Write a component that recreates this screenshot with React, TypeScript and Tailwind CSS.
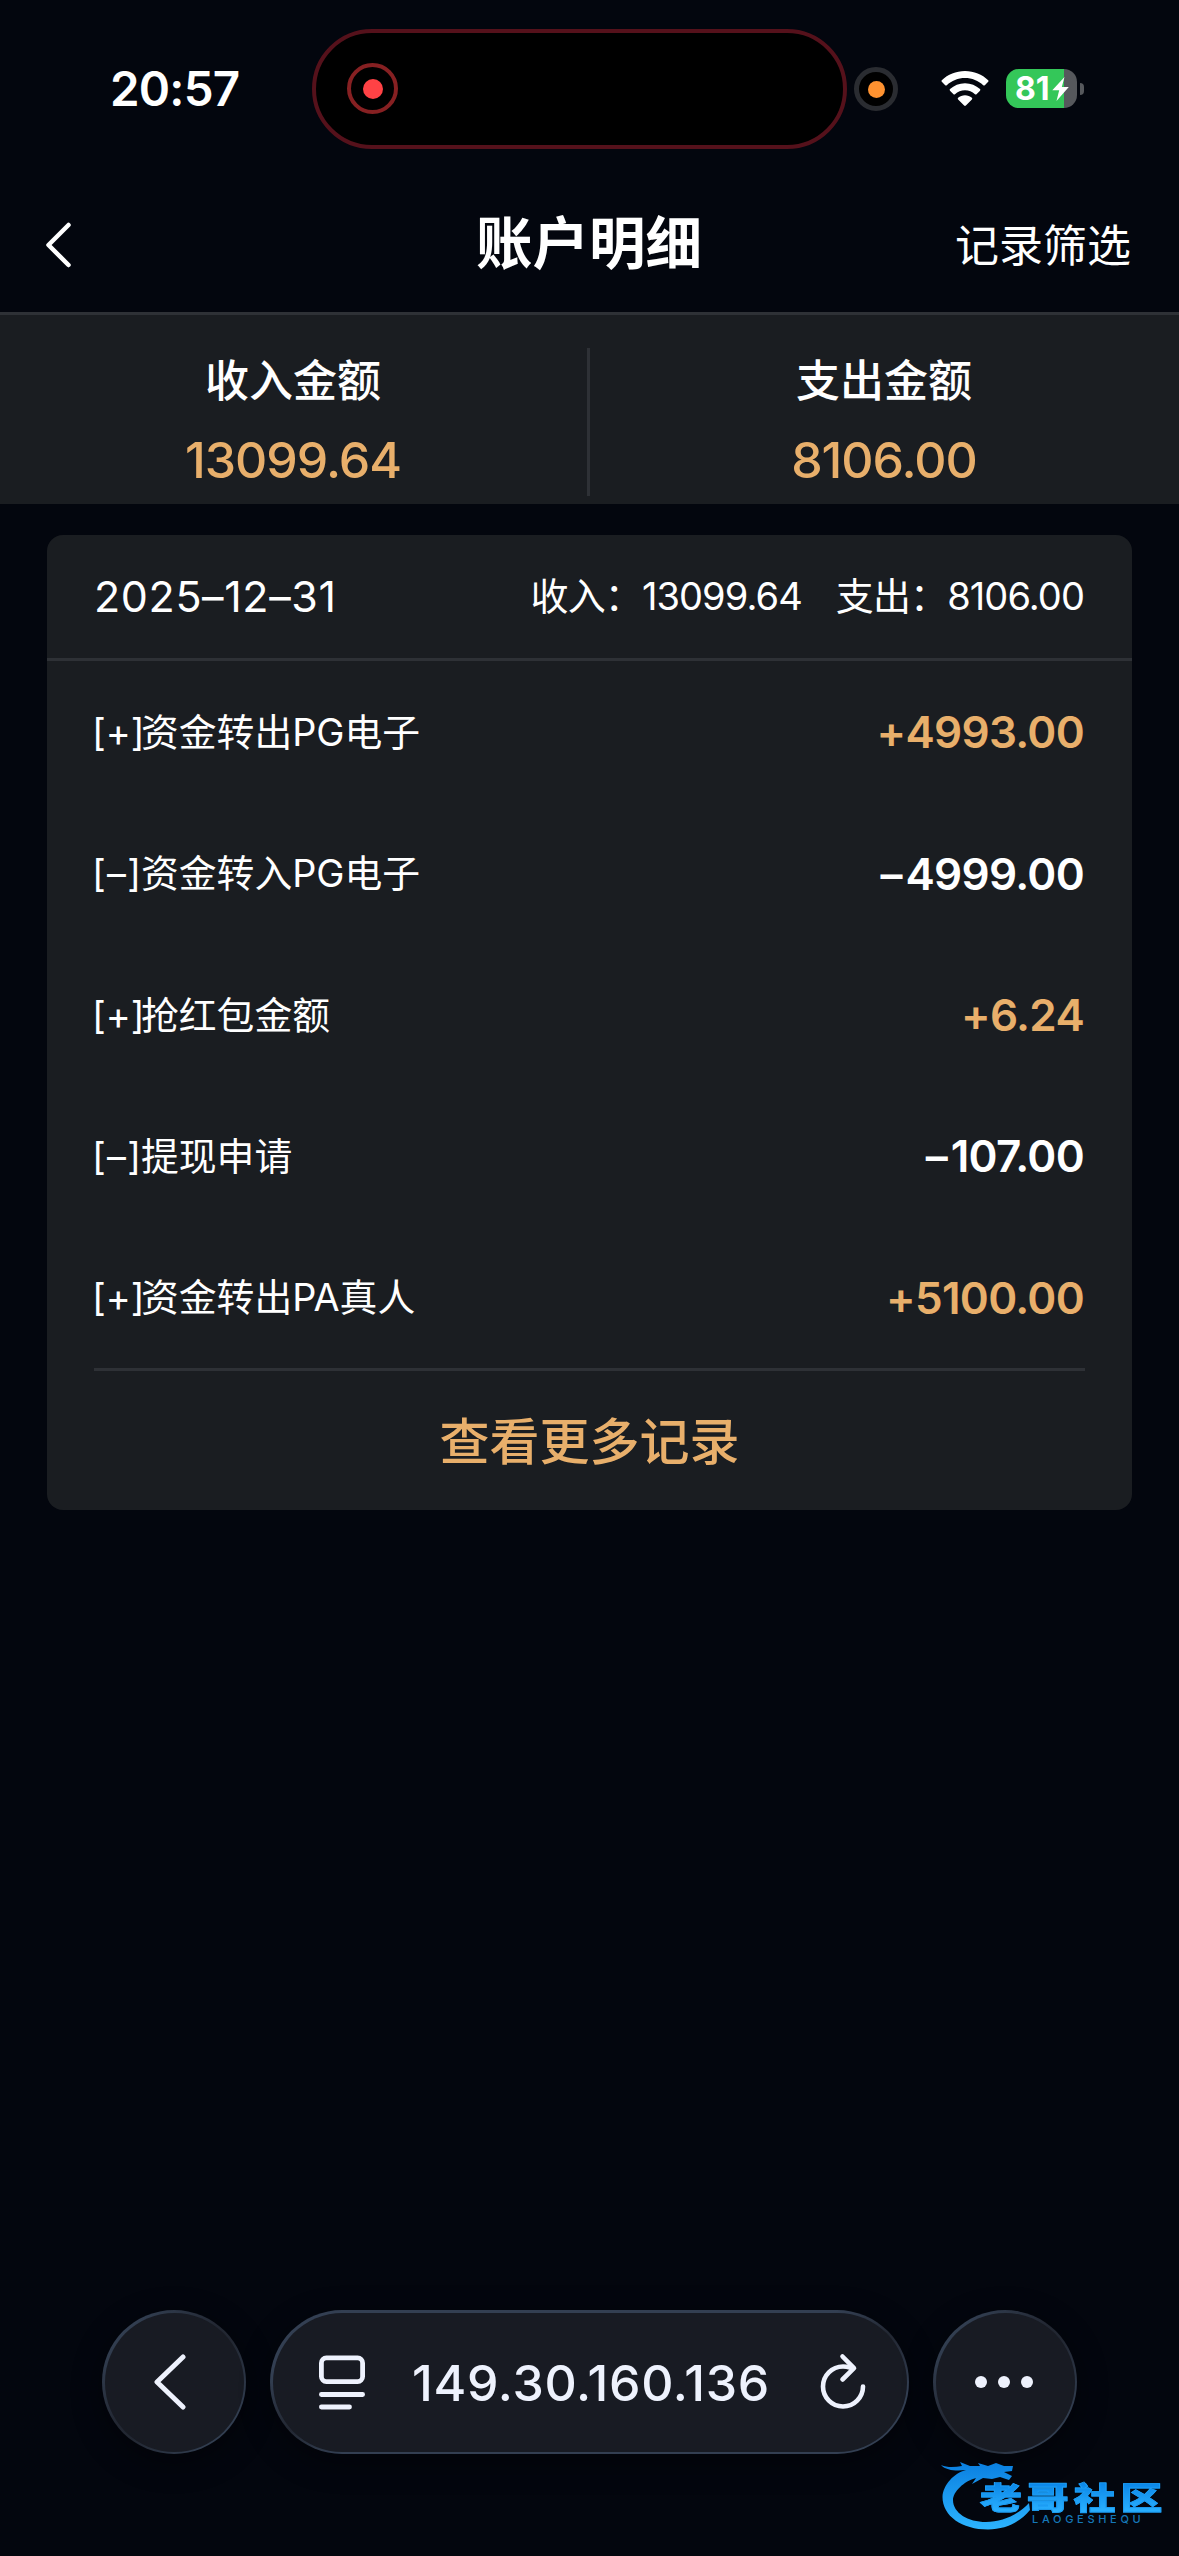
const records = [
  { sign: "+", label: "资金转出PG电子", amount: "4993.00" },
  { sign: "–", label: "资金转入PG电子", amount: "4999.00" },
  { sign: "+", label: "抢红包金额", amount: "6.24" },
  { sign: "–", label: "提现申请", amount: "107.00" },
  { sign: "+", label: "资金转出PA真人", amount: "5100.00" },
];

function WifiIcon() {
  return (
    <svg width="48" height="36" viewBox="0 0 48 36" fill="white">
      <path d="M24 0C33 0 41.200 3.500 47.200 9.200Q48 10 47.200 10.800L43.800 14.200Q43 15 42.200 14.200C37.400 9.700 31 7 24 7C17 7 10.600 9.700 5.800 14.200Q5 15 4.200 14.200L0.800 10.800Q0 10 0.800 9.200C6.800 3.500 15 0 24 0Z" />
      <path d="M24 12.200C29.800 12.200 35 14.400 39 18.100Q39.800 18.900 39 19.700L35.500 23.200Q34.800 23.900 34 23.200C31.300 20.800 27.800 19.300 24 19.300C20.200 19.300 16.700 20.800 14 23.200Q13.200 23.900 12.500 23.200L9 19.700Q8.200 18.900 9 18.100C13 14.400 18.200 12.200 24 12.200Z" />
      <path d="M24 24.200C26.600 24.200 29 25.200 30.900 26.800Q31.700 27.600 30.900 28.400L24.900 34.600Q24 35.500 23.100 34.600L17.100 28.400Q16.300 27.600 17.100 26.800C19 25.200 21.400 24.200 24 24.200Z" />
    </svg>
  );
}

function Battery() {
  return (
    <div className="flex items-center gap-[3px]">
      <div className="flex h-[39px] w-[71px] items-center overflow-hidden rounded-[13px] bg-linear-to-r from-[#34c759] from-82% to-[#56585c] to-82% pl-[9px]">
        <span className="text-[32px] leading-none font-bold">81</span>
        <svg
          className="ml-[2px]"
          width="17"
          height="24"
          viewBox="0 0 17 24"
          fill="white"
        >
          <path d="M12.500 0L0.300 13.200H7.200L4.500 24L16.800 9.900H9.800Z" />
        </svg>
      </div>
      <div className="h-[12px] w-[4px] rounded-r-full bg-[#56585c]" />
    </div>
  );
}

function StatusBar() {
  return (
    <div className="flex h-[177px] items-center">
      <div className="w-[312px] pl-[110px] text-[47.500px] leading-none font-semibold tracking-[-0.800px]">
        20:57
      </div>
      <div className="flex h-[120px] w-[535px] items-center rounded-full border-[4px] border-[#55111b] bg-black pl-[31px]">
        <div className="flex size-[51px] items-center justify-center rounded-full border-[4px] border-[#862022]">
          <div className="size-[20px] rounded-full bg-[#ff4245]" />
        </div>
      </div>
      <div className="mt-px ml-[7px] flex size-[44px] items-center justify-center rounded-full border-[5px] border-[#2a2c31] bg-black">
        <div className="size-[17px] rounded-full bg-[#ff9230]" />
      </div>
      <div className="ml-[43px] flex items-center gap-[17px]">
        <WifiIcon />
        <Battery />
      </div>
    </div>
  );
}

function Header() {
  return (
    <div className="grid h-[135px] grid-cols-3 items-center pr-[48px] pl-[45px]">
      <svg
        className="mt-[1px]"
        width="27"
        height="46"
        viewBox="0 0 27 46"
        fill="none"
        stroke="white"
        strokeWidth="4.500"
        strokeLinecap="round"
        strokeLinejoin="round"
      >
        <path d="M23.500 3L3.500 23L23.500 43" />
      </svg>
      <h1 className="mb-[1px] pl-[2px] text-center text-[56.500px] leading-none font-bold">
        账户明细
      </h1>
      <span className="mt-[2px] text-right text-[44px] leading-none">
        记录筛选
      </span>
    </div>
  );
}

function Total({ label, value }: { label: string; value: string }) {
  return (
    <div className="flex flex-col items-center pr-[1px]">
      <span className="mt-[41px] text-[44px] leading-[50px] font-medium">
        {label}
      </span>
      <span className="mt-[24px] text-[50px] leading-[60px] font-medium tracking-[-1px] text-[#e8af6b]">
        {value}
      </span>
    </div>
  );
}

function RecordCard() {
  return (
    <div className="mx-[47px] mt-[31px] rounded-[16px] bg-[#1a1d21]">
      <div className="flex h-[126px] items-center justify-between border-b-[3px] border-[#2e3136] px-[47px]">
        <span className="text-[43px] tracking-[0.600px]">2025–12–31</span>
        <div className="flex gap-[34px] pr-[1px] text-[38px] tracking-[-0.900px]">
          <span>收入：13099.64</span>
          <span>支出：8106.00</span>
        </div>
      </div>
      <div className="px-[47px]">
        {records.map(({ sign, label, amount }) => (
          <div
            key={label}
            className="flex h-[141.400px] items-center justify-between pt-[1px]"
          >
            <div className="-ml-[2px] flex text-[37.800px]">
              <span className="flex w-[49px] justify-between">
                <span>[</span>
                <span>{sign}</span>
                <span>]</span>
              </span>
              <span>{label}</span>
            </div>
            <span
              className={`pr-[1px] text-[44px] font-semibold tracking-[-0.700px] ${sign === "+" ? "text-[#e8af6b]" : "text-white"}`}
            >
              <span className={sign === "+" ? "" : "tracking-[3px]"}>
                {sign}
              </span>
              {amount}
            </span>
          </div>
        ))}
        <div className="flex h-[142px] items-center justify-center border-t-[3px] border-[#2e3136] pt-[4px] text-[50px] font-medium text-[#e8af6b]">
          查看更多记录
        </div>
      </div>
    </div>
  );
}

// Glass outlines: dim at top-right and bottom-left, bright elsewhere
const circle =
  "w-[144px] rounded-full bg-linear-[135deg,#3a4a60,#222732_45%,#222732_55%,#3a4a60] p-[2.500px] shadow-[0_8px_30px_rgba(0,0,0,0.4)]";
const pill =
  "w-[639px] rounded-full bg-[conic-gradient(#333f52_0deg_74deg,#222732_81deg,#333f52_91deg_254deg,#222732_261deg,#333f52_271deg)] p-[2.500px] shadow-[0_8px_30px_rgba(0,0,0,0.4)]";

function BrowserBar() {
  return (
    <div className="mt-auto mb-[102px] flex h-[144px] gap-[24px] pl-[102px] text-[#eef2fd]">
      <div className={circle}>
        <div className="flex size-full items-center justify-center rounded-full bg-[#181b23]">
          <svg
            className="mr-[9px]"
            width="32"
            height="56"
            viewBox="0 0 32 56"
            fill="none"
            stroke="currentColor"
            strokeWidth="5"
            strokeLinecap="round"
            strokeLinejoin="round"
          >
            <path d="M29 3L3 28L29 53" />
          </svg>
        </div>
      </div>
      <div className={pill}>
        <div className="flex size-full items-center rounded-full bg-[#181b23] pr-[41px] pl-[46px]">
          <svg
            width="46"
            height="55"
            viewBox="0 0 46 55"
            fill="none"
            stroke="currentColor"
            strokeWidth="4.800"
            strokeLinecap="round"
          >
            <rect x="2.400" y="2.900" width="41.200" height="23.700" rx="5" />
            <path d="M2.400 39.500H43.600M2.400 52H30.500" />
          </svg>
          <span className="flex-1 pt-[1px] pr-[2px] text-center text-[50px] leading-none font-medium tracking-[0.700px]">
            149.30.160.136
          </span>
          <svg
            className="-mt-[2px]"
            width="46"
            height="58"
            viewBox="0 0 46 58"
            fill="none"
            stroke="currentColor"
            strokeWidth="4.600"
            strokeLinecap="round"
            strokeLinejoin="round"
          >
            <path d="M43 34.500A20 20 0 1 1 23 14.500C26.500 14.500 29 15.300 33 16.200" />
            <path d="M22.500 4.500L34 16.200L22.500 27.500" />
          </svg>
        </div>
      </div>
      <div className={circle}>
        <div className="flex size-full items-center justify-center gap-[11px] rounded-full bg-[#181b23] pr-[2px]">
          <span className="size-[12px] rounded-full bg-current" />
          <span className="size-[12px] rounded-full bg-current" />
          <span className="size-[12px] rounded-full bg-current" />
        </div>
      </div>
    </div>
  );
}

function Watermark() {
  return (
    <div className="absolute top-[2454px] left-[938px] h-[80px] w-[230px]">
      <svg
        className="absolute inset-0"
        width="100"
        height="80"
        viewBox="0 0 100 80"
      >
        <defs>
          <linearGradient id="dragon" x1="0" y1="0" x2="0" y2="1">
            <stop offset="0" stopColor="#0a7fe0" />
            <stop offset="1" stopColor="#2cb4ff" />
          </linearGradient>
        </defs>
        <path
          fill="url(#dragon)"
          d="M3 11C10 14 17 13 24 12L22 8L32 12L42 12L40 9L50 12L58 9L66 12L75 12L74 17L66 18L74 22L71 26L62 23L54 25L45 24L34 30L38 24C26 27 15 38 15 46C15 59 30 68 48 68C64 68 80 61 91 49L92 56C82 68 68 75.500 50 75.500C24 75.500 4.500 62 4.500 43C5 31 16 19 28 16C20 17 8 17 3 11Z"
        />
      </svg>
      <div className="absolute top-[29px] left-[42px] origin-left scale-x-[1.350] bg-linear-to-b from-[#0a86e8] to-[#2bb2ff] bg-clip-text text-[31px] leading-[30px] font-black tracking-[3.700px] whitespace-nowrap text-transparent [-webkit-text-stroke:0.8px_#1c9cf4]">
        老哥社区
      </div>
      <div className="absolute top-[61px] left-[94px] text-[11px] leading-[9px] font-medium tracking-[3.700px] text-[#1577b8]">
        LAOGESHEQU
      </div>
    </div>
  );
}

export default function App() {
  return (
    <div className="relative flex h-[2556px] w-[1179px] flex-col bg-[#03060e] font-['Inter','Noto_Sans_CJK_SC',sans-serif] text-white">
      <StatusBar />
      <Header />
      <div className="grid h-[192px] grid-cols-[587px_3px_589px] border-t-[3px] border-[#2e3136] bg-[#1a1d21]">
        <Total label="收入金额" value="13099.64" />
        <div className="mt-[33px] h-[148px] bg-[#2e3136]" />
        <Total label="支出金额" value="8106.00" />
      </div>
      <RecordCard />
      <BrowserBar />
      <Watermark />
    </div>
  );
}
